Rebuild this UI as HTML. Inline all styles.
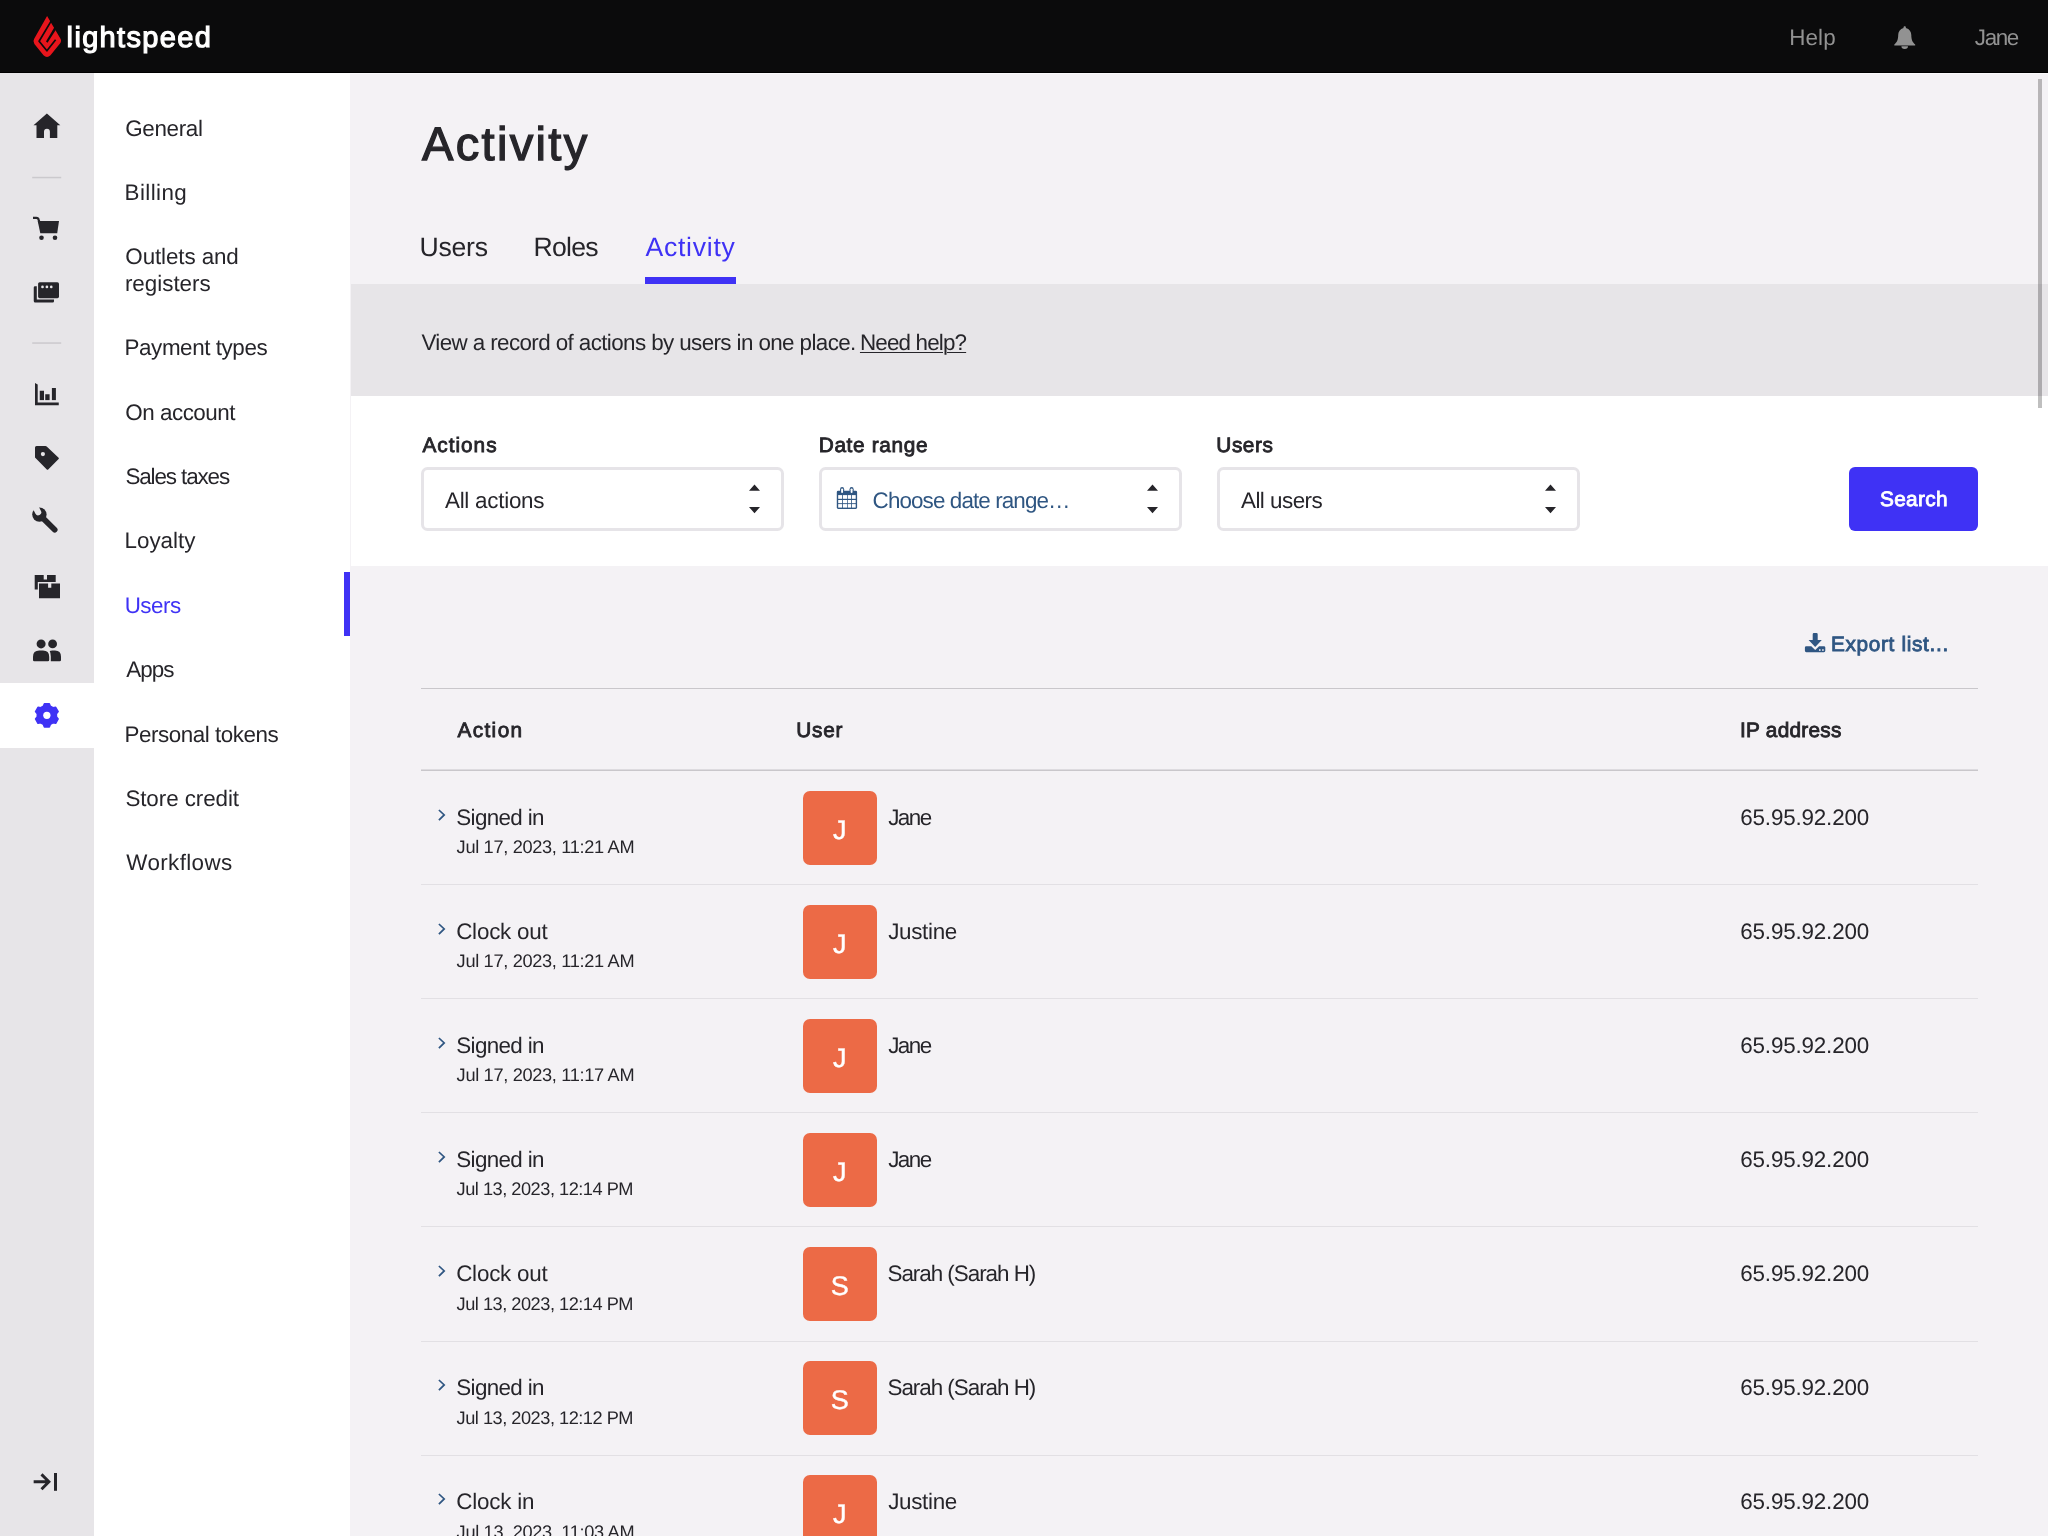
<!DOCTYPE html>
<html lang="en"><head><meta charset="utf-8"><title>Activity</title>
<style>
html,body{margin:0;padding:0}
body{width:2048px;height:1536px;overflow:hidden;position:relative;will-change:transform;text-rendering:geometricPrecision;background:#f4f2f5;font-family:"Liberation Sans",sans-serif;color:#26252a;-webkit-font-smoothing:antialiased}
span,div,a,svg,h1,label,p,b,time{position:absolute;white-space:nowrap;margin:0;padding:0;font-weight:400}
a{color:inherit;text-decoration:none}
.topbar{left:0;top:0;width:2048px;height:72px;background:#0b0b0c;border-bottom:1px solid #000}
.topline{left:0;top:73px;width:2048px;height:1px;background:#fbfafc}
.rail{left:0;top:73px;width:94px;height:1463px;background:#e7e5e8}
.railact{left:0;top:683px;width:94px;height:65px;background:#fff}
.side{left:94px;top:73px;width:256px;height:1463px;background:#fff}
.sideact{left:344px;top:571.5px;width:6px;height:64.5px;background:#3f32f5}
.band{left:351px;top:284px;width:1697px;height:112px;background:#e7e5e8}
.filters{left:351px;top:396px;width:1697px;height:170px;background:#fff}
.sel{box-sizing:border-box;top:466.5px;width:363px;height:64.5px;border:3px solid #e6e4e8;border-radius:6.5px;background:#fff}
.btn{left:1849px;top:466.5px;width:129px;height:64.5px;border-radius:6px;background:#3f32f5}
.av{width:73.5px;height:74px;left:803px;border-radius:7px;background:#ec6a46}
.hl{left:421px;width:1557px}
.tabline{left:645px;top:276.5px;width:90.7px;height:7px;background:#3f32f5}
.scroll{left:2037.6px;top:79px;width:4.4px;height:328.8px;background:rgba(0,0,0,.25)}
</style></head><body>

<div class="topbar"></div><div class="topline"></div><div class="rail"></div><div class="railact"></div><div class="side"></div><div class="sideact"></div>
<div class="band"></div><div class="filters"></div><div class="scroll"></div>
<nav aria-label="Main"><svg style="left:0;top:73px" width="94" height="1463" viewBox="0 73 94 1463"><rect x="32.200" y="176.800" width="29" height="1.500" fill="#cbc9cd"/><rect x="32.200" y="342.300" width="29" height="1.500" fill="#cbc9cd"/><path d="M46.900 113.600 L60.300 125.200 L57.300 125.200 L57.300 138 L49.900 138 L49.900 131.700 A2.950 2.950 0 0 0 44 131.700 L44 138 L36.500 138 L36.500 125.200 L33.500 125.200 Z" fill="#26252a"/><path d="M37.700 221 L59 221 L57.200 233.200 L40.300 233.200 Z" fill="#26252a"/><path d="M33 217.800 L36.300 217.800 Q38.300 217.800 38.700 219.800 L39.500 223" fill="none" stroke="#26252a" stroke-width="2.300"/><circle cx="41.500" cy="237.750" r="2.300" fill="#26252a"/><circle cx="55" cy="237.750" r="2.300" fill="#26252a"/><rect x="38.100" y="282.250" width="20.900" height="15.900" rx="1.600" fill="#26252a"/><circle cx="42.500" cy="286.900" r="1.350" fill="#e7e5e8"/><circle cx="46.900" cy="286.900" r="1.350" fill="#e7e5e8"/><circle cx="51.250" cy="286.900" r="1.350" fill="#e7e5e8"/><path d="M33.750 287.600 Q33.750 286.300 35 286.300 L36.800 286.300 L36.800 299.400 L54 299.400 L54 301.200 Q54 302.500 52.700 302.500 L35.200 302.500 Q33.750 302.500 33.750 301 Z" fill="#26252a"/><path d="M35 383.100 L37.700 384.600 L37.700 402.600 L58.750 402.600 L58.750 405.250 L35 405.250 Z" fill="#26252a"/><rect x="39.750" y="390.750" width="4.250" height="9.350" fill="#26252a"/><rect x="45.250" y="394.250" width="4.350" height="5.850" fill="#26252a"/><rect x="51.900" y="388" width="4" height="12.100" fill="#26252a"/><path d="M36.500 446 L45.500 446 Q46.200 446 46.700 446.500 L58.600 457.700 Q59.300 458.400 58.600 459.100 L48.200 469.400 Q47.500 470.100 46.800 469.400 L35.500 458.100 Q35 457.600 35 456.900 L35 447.500 Q35 446 36.500 446 Z" fill="#26252a"/><circle cx="42.900" cy="454.100" r="2.100" fill="#e7e5e8"/><circle cx="39.400" cy="514.600" r="7.200" fill="#26252a"/><path d="M39.400 514.600 L54.700 529.700" stroke="#26252a" stroke-width="5.700" stroke-linecap="round" fill="none"/><path d="M38.200 512.300 L33.600 503.400" stroke="#e7e5e8" stroke-width="6.200" stroke-linecap="round" fill="none"/><path d="M34.700 574.900 L43.700 574.900 L43.700 579.400 L47 579.400 L47 574.900 L55.700 574.900 L55.700 582.100 L37.800 582.100 L37.800 589.500 L34.700 589.500 Z" fill="#26252a"/><path d="M39 583.400 L48.100 583.400 L48.100 587.700 L51.300 587.700 L51.300 583.400 L60 583.400 L60 598.200 L39 598.200 Z" fill="#26252a"/><circle cx="41.100" cy="643.900" r="4.500" fill="#26252a"/><path d="M33 661.300 L33 656.800 Q33 650.500 39.300 650.500 L43 650.500 Q49.200 650.500 49.200 656.800 L49.200 660 Q49.200 661.300 47.900 661.300 L34.300 661.300 Q33 661.300 33 660 Z" fill="#26252a"/><circle cx="52.600" cy="643.900" r="4.400" fill="#26252a"/><path d="M50.800 661.300 L50.800 656.500 Q50.800 653 49.700 651 Q50.700 650.500 52.200 650.500 L55 650.500 Q61 650.500 61 656.800 L61 660 Q61 661.300 59.700 661.300 Z" fill="#26252a"/><path d="M43.37 706.24 L44.38 703.66 L49.32 703.66 L50.33 706.24 L52.95 707.76 L55.69 707.34 L58.17 711.62 L56.43 713.78 L56.43 716.82 L58.17 718.98 L55.69 723.26 L52.95 722.84 L50.33 724.36 L49.32 726.94 L44.38 726.94 L43.37 724.36 L40.75 722.84 L38.01 723.26 L35.53 718.98 L37.27 716.82 L37.27 713.78 L35.53 711.62 L38.01 707.34 L40.75 707.76 Z" fill="#3f32f5" stroke="#3f32f5" stroke-width="1.500" stroke-linejoin="round"/><circle cx="46.850" cy="715.300" r="3.650" fill="#fff"/><path d="M33.650 1481.800 L48 1481.800 M41.500 1474.400 L48.900 1481.800 L41.500 1489.200" fill="none" stroke="#26252a" stroke-width="2.900"/><rect x="54" y="1473" width="3" height="17.800" fill="#26252a"/></svg></nav>
<header>
<svg style="left:0;top:0" width="100" height="73" viewBox="0 0 100 73"><path d="M47.100 16 L60.200 38.200 Q62 40.800 60 43.400 L50.500 55.200 Q47 58.700 43.500 55.200 L34.400 43.900 Q32.500 41.200 34.200 38.700 Z" fill="#e8151c"/><path d="M51.400 20.600 L39.100 41.200 L46.900 50.800 L55.600 39.700" fill="none" stroke="#0b0b0c" stroke-width="1.700" stroke-linejoin="round"/><path d="M54.400 27.300 L55.900 29.800 L47.500 42.700 L46 41.600 Z" fill="#0b0b0c"/></svg>
<span style="left:66.62px;top:22px;font-size:29px;line-height:32px;letter-spacing:1.328px;color:#fff;-webkit-text-stroke:1.15px #fff;">lightspeed</span>
<a style="left:1789.16px;top:25px;font-size:22.4px;line-height:25px;letter-spacing:0.136px;color:#929292;">Help</a>
<a style="left:1974.85px;top:25px;font-size:22.4px;line-height:25px;letter-spacing:-1.410px;color:#929292;">Jane</a>
<svg style="left:1880px;top:20px" width="50" height="36" viewBox="1880 20 50 36"><path d="M1904.700 26.300 C1905.600 26.300 1906 27 1905.900 27.900 C1909.500 28.800 1911.300 31.800 1911.300 35 C1911.300 40 1912.800 42.600 1915.200 44.400 L1915.200 45.400 L1894.300 45.400 L1894.300 44.400 C1896.700 42.600 1898.200 40 1898.200 35 C1898.200 31.800 1900 28.800 1903.500 27.900 C1903.400 27 1903.800 26.300 1904.700 26.300 Z M1901.400 46.300 L1908 46.300 A3.300 2.700 0 0 1 1901.400 46.300 Z" fill="#929292"/></svg>
</header>
<nav aria-label="Setup">
<a style="left:125.27px;top:116px;font-size:22.4px;line-height:25px;letter-spacing:-0.345px;">General</a>
<a style="left:124.56px;top:180px;font-size:22.4px;line-height:25px;letter-spacing:0.419px;">Billing</a>
<a style="left:125.34px;top:244px;font-size:22.4px;line-height:25px;letter-spacing:-0.106px;">Outlets and</a>
<a style="left:124.91px;top:271px;font-size:22.4px;line-height:25px;letter-spacing:-0.012px;">registers</a>
<a style="left:124.56px;top:335px;font-size:22.4px;line-height:25px;letter-spacing:-0.418px;">Payment types</a>
<a style="left:125.34px;top:400px;font-size:22.4px;line-height:25px;letter-spacing:-0.482px;">On account</a>
<a style="left:125.38px;top:464px;font-size:22.4px;line-height:25px;letter-spacing:-1.097px;">Sales taxes</a>
<a style="left:124.56px;top:528px;font-size:22.4px;line-height:25px;letter-spacing:-0.016px;">Loyalty</a>
<a style="left:124.67px;top:593px;font-size:22.4px;line-height:25px;letter-spacing:-0.489px;color:#3f32f5;">Users</a>
<a style="left:126.36px;top:657px;font-size:22.4px;line-height:25px;letter-spacing:-0.985px;">Apps</a>
<a style="left:124.56px;top:722px;font-size:22.4px;line-height:25px;letter-spacing:-0.463px;">Personal tokens</a>
<a style="left:125.38px;top:786px;font-size:22.4px;line-height:25px;letter-spacing:-0.078px;">Store credit</a>
<a style="left:126.30px;top:850px;font-size:22.4px;line-height:25px;letter-spacing:0.377px;">Workflows</a>
</nav>
<main>
<h1 style="left:422.06px;top:117px;font-size:47px;line-height:53px;letter-spacing:2.319px;-webkit-text-stroke:1.3px #26252a;">Activity</h1>
<a style="left:419.45px;top:232px;font-size:26.6px;line-height:30px;letter-spacing:-0.238px;">Users</a>
<a style="left:533.42px;top:232px;font-size:26.6px;line-height:30px;letter-spacing:-0.716px;">Roles</a>
<a style="left:645.45px;top:232px;font-size:26.6px;line-height:30px;letter-spacing:0.737px;color:#3f32f5;">Activity</a>
<div class="tabline"></div>
<p style="left:421.40px;top:330px;font-size:22.4px;line-height:25px;letter-spacing:-0.601px;">View a record of actions by users in one place.</p>
<a style="left:859.96px;top:330px;font-size:22.4px;line-height:25px;letter-spacing:-0.835px;text-decoration:underline;text-underline-offset:1.500px;text-decoration-thickness:1.300px;">Need help?</a>
<label style="left:422.38px;top:434px;font-size:20.8px;line-height:23px;letter-spacing:0.997px;-webkit-text-stroke:0.85px #26252a;">Actions</label>
<label style="left:818.72px;top:434px;font-size:20.8px;line-height:23px;letter-spacing:0.652px;-webkit-text-stroke:0.85px #26252a;">Date range</label>
<label style="left:1216.32px;top:434px;font-size:20.8px;line-height:23px;letter-spacing:0.547px;-webkit-text-stroke:0.85px #26252a;">Users</label>
<div class="sel" style="left:421px"></div>
<svg style="left:748.7px;top:484px" width="11" height="30" viewBox="0 0 11 30"><path d="M0 6.800 L5.500 .5 L11 6.800 Z M0 23 L11 23 L5.500 29.300 Z" fill="#26252a"/></svg>
<div class="sel" style="left:819px"></div>
<svg style="left:1146.7px;top:484px" width="11" height="30" viewBox="0 0 11 30"><path d="M0 6.800 L5.500 .5 L11 6.800 Z M0 23 L11 23 L5.500 29.300 Z" fill="#26252a"/></svg>
<div class="sel" style="left:1217px"></div>
<svg style="left:1544.7px;top:484px" width="11" height="30" viewBox="0 0 11 30"><path d="M0 6.800 L5.500 .5 L11 6.800 Z M0 23 L11 23 L5.500 29.300 Z" fill="#26252a"/></svg>
<span style="left:444.96px;top:488px;font-size:22.4px;line-height:25px;letter-spacing:-0.249px;">All actions</span>
<svg style="left:830px;top:480px" width="34" height="36" viewBox="830 480 34 36"><rect x="836.800" y="490.700" width="20.300" height="18.300" rx="1.400" fill="#2f5682"/><rect x="838.2" y="495.1" width="3.90" height="3.70" fill="#fff"/><rect x="838.2" y="500.0" width="3.90" height="3.20" fill="#fff"/><rect x="838.2" y="504.1" width="3.90" height="3.50" fill="#fff"/><rect x="842.9" y="495.1" width="4.30" height="3.70" fill="#fff"/><rect x="842.9" y="500.0" width="4.30" height="3.20" fill="#fff"/><rect x="842.9" y="504.1" width="4.30" height="3.50" fill="#fff"/><rect x="847.9" y="495.1" width="3.20" height="3.70" fill="#fff"/><rect x="847.9" y="500.0" width="3.20" height="3.20" fill="#fff"/><rect x="847.9" y="504.1" width="3.20" height="3.50" fill="#fff"/><rect x="851.9" y="495.1" width="3.80" height="3.70" fill="#fff"/><rect x="851.9" y="500.0" width="3.80" height="3.20" fill="#fff"/><rect x="851.9" y="504.1" width="3.80" height="3.50" fill="#fff"/><rect x="840.05" y="487.100" width="4.100" height="6.400" rx="2.050" fill="#2f5682"/><rect x="841.15" y="488.400" width="1.900" height="4.500" rx="0.950" fill="#fff"/><rect x="849.55" y="487.100" width="4.100" height="6.400" rx="2.050" fill="#2f5682"/><rect x="850.65" y="488.400" width="1.900" height="4.500" rx="0.950" fill="#fff"/></svg>
<span style="left:872.61px;top:488px;font-size:22.4px;line-height:25px;letter-spacing:-0.883px;color:#2f5682;">Choose date range…</span>
<span style="left:1240.96px;top:488px;font-size:22.4px;line-height:25px;letter-spacing:-0.505px;">All users</span>
<div class="btn"></div>
<span style="left:1879.98px;top:488px;font-size:20.8px;line-height:23px;letter-spacing:0.358px;color:#fff;-webkit-text-stroke:0.85px #fff;">Search</span>
<svg style="left:1800px;top:628px" width="30" height="30" viewBox="1800 628 30 30"><path d="M1812.700 634.300 Q1812.700 633.100 1813.900 633.100 L1816.500 633.100 Q1817.700 633.100 1817.700 634.300 L1817.700 640.100 L1821.800 640.100 L1815.200 647.100 L1808.600 640.100 L1812.700 640.100 Z" fill="#2f5682"/><path d="M1806.300 646.200 L1811.300 646.200 L1815.200 649.900 L1819.100 646.200 L1823.900 646.200 Q1825.300 646.200 1825.300 647.600 L1825.300 650.800 Q1825.300 652.200 1823.900 652.200 L1806.300 652.200 Q1804.900 652.200 1804.900 650.800 L1804.900 647.600 Q1804.900 646.200 1806.300 646.200 Z" fill="#2f5682"/><rect x="1819" y="649.300" width="1.600" height="1.500" fill="#f4f2f5"/><rect x="1822.100" y="649.300" width="1.600" height="1.500" fill="#f4f2f5"/></svg>
<a style="left:1830.97px;top:633px;font-size:20.8px;line-height:23px;letter-spacing:0.662px;color:#2f5682;-webkit-text-stroke:0.85px #2f5682;">Export list...</a>
<div class="hl" style="top:688px;height:1px;background:#c9c7cb"></div>
<div class="hl" style="top:769px;height:1px;background:#dddbdf"></div><div class="hl" style="top:770px;height:1px;background:#c9c7cb"></div>
<b style="left:457.38px;top:719px;font-size:20.8px;line-height:23px;letter-spacing:1.396px;-webkit-text-stroke:0.85px #26252a;">Action</b>
<b style="left:796.32px;top:719px;font-size:20.8px;line-height:23px;letter-spacing:0.728px;-webkit-text-stroke:0.85px #26252a;">User</b>
<b style="left:1740.01px;top:719px;font-size:20.8px;line-height:23px;letter-spacing:0.252px;-webkit-text-stroke:0.85px #26252a;">IP address</b>
<article>
<svg style="left:436px;top:807.00px" width="12" height="16" viewBox="436 807 12 16"><path d="M438.900 810 L444.200 814.950 L438.900 820.100" fill="none" stroke="#2f5682" stroke-width="1.700"/></svg>
<span style="left:456.28px;top:805px;font-size:22.4px;line-height:25px;letter-spacing:-0.642px;">Signed in</span>
<time style="left:456.62px;top:837px;font-size:18.2px;line-height:20px;letter-spacing:-0.322px;">Jul 17, 2023, 11:21 AM</time>
<div class="av" style="top:790.90px"></div>
<span style="left:803.00px;top:815px;font-size:27px;line-height:30px;color:#fff;width:73.500px;text-align:center;-webkit-text-stroke:0.400px #fff;">J</span>
<span style="left:888.15px;top:805px;font-size:22.4px;line-height:25px;letter-spacing:-1.476px;">Jane</span>
<span style="left:1740.26px;top:805px;font-size:22.4px;line-height:25px;letter-spacing:-0.162px;">65.95.92.200</span>
<div class="hl" style="top:884px;height:1px;background:#e2e0e4"></div>
</article>
<article>
<svg style="left:436px;top:921.08px" width="12" height="16" viewBox="436 807 12 16"><path d="M438.900 810 L444.200 814.950 L438.900 820.100" fill="none" stroke="#2f5682" stroke-width="1.700"/></svg>
<span style="left:456.16px;top:919px;font-size:22.4px;line-height:25px;letter-spacing:-0.209px;">Clock out</span>
<time style="left:456.62px;top:951px;font-size:18.2px;line-height:20px;letter-spacing:-0.322px;">Jul 17, 2023, 11:21 AM</time>
<div class="av" style="top:904.98px"></div>
<span style="left:803.00px;top:929px;font-size:27px;line-height:30px;color:#fff;width:73.500px;text-align:center;-webkit-text-stroke:0.400px #fff;">J</span>
<span style="left:888.15px;top:919px;font-size:22.4px;line-height:25px;letter-spacing:-0.305px;">Justine</span>
<span style="left:1740.26px;top:919px;font-size:22.4px;line-height:25px;letter-spacing:-0.162px;">65.95.92.200</span>
<div class="hl" style="top:998px;height:1px;background:#e2e0e4"></div>
</article>
<article>
<svg style="left:436px;top:1035.16px" width="12" height="16" viewBox="436 807 12 16"><path d="M438.900 810 L444.200 814.950 L438.900 820.100" fill="none" stroke="#2f5682" stroke-width="1.700"/></svg>
<span style="left:456.28px;top:1033px;font-size:22.4px;line-height:25px;letter-spacing:-0.642px;">Signed in</span>
<time style="left:456.62px;top:1065px;font-size:18.2px;line-height:20px;letter-spacing:-0.322px;">Jul 17, 2023, 11:17 AM</time>
<div class="av" style="top:1019.06px"></div>
<span style="left:803.00px;top:1043px;font-size:27px;line-height:30px;color:#fff;width:73.500px;text-align:center;-webkit-text-stroke:0.400px #fff;">J</span>
<span style="left:888.15px;top:1033px;font-size:22.4px;line-height:25px;letter-spacing:-1.476px;">Jane</span>
<span style="left:1740.26px;top:1033px;font-size:22.4px;line-height:25px;letter-spacing:-0.162px;">65.95.92.200</span>
<div class="hl" style="top:1112px;height:1px;background:#e2e0e4"></div>
</article>
<article>
<svg style="left:436px;top:1149.24px" width="12" height="16" viewBox="436 807 12 16"><path d="M438.900 810 L444.200 814.950 L438.900 820.100" fill="none" stroke="#2f5682" stroke-width="1.700"/></svg>
<span style="left:456.28px;top:1147px;font-size:22.4px;line-height:25px;letter-spacing:-0.642px;">Signed in</span>
<time style="left:456.62px;top:1179px;font-size:18.2px;line-height:20px;letter-spacing:-0.486px;">Jul 13, 2023, 12:14 PM</time>
<div class="av" style="top:1133.14px"></div>
<span style="left:803.00px;top:1157px;font-size:27px;line-height:30px;color:#fff;width:73.500px;text-align:center;-webkit-text-stroke:0.400px #fff;">J</span>
<span style="left:888.15px;top:1147px;font-size:22.4px;line-height:25px;letter-spacing:-1.476px;">Jane</span>
<span style="left:1740.26px;top:1147px;font-size:22.4px;line-height:25px;letter-spacing:-0.162px;">65.95.92.200</span>
<div class="hl" style="top:1226px;height:1px;background:#e2e0e4"></div>
</article>
<article>
<svg style="left:436px;top:1263.32px" width="12" height="16" viewBox="436 807 12 16"><path d="M438.900 810 L444.200 814.950 L438.900 820.100" fill="none" stroke="#2f5682" stroke-width="1.700"/></svg>
<span style="left:456.16px;top:1261px;font-size:22.4px;line-height:25px;letter-spacing:-0.209px;">Clock out</span>
<time style="left:456.62px;top:1294px;font-size:18.2px;line-height:20px;letter-spacing:-0.486px;">Jul 13, 2023, 12:14 PM</time>
<div class="av" style="top:1247.22px"></div>
<span style="left:803.00px;top:1271px;font-size:27px;line-height:30px;color:#fff;width:73.500px;text-align:center;-webkit-text-stroke:0.400px #fff;">S</span>
<span style="left:887.48px;top:1261px;font-size:22.4px;line-height:25px;letter-spacing:-1.014px;">Sarah (Sarah H)</span>
<span style="left:1740.26px;top:1261px;font-size:22.4px;line-height:25px;letter-spacing:-0.162px;">65.95.92.200</span>
<div class="hl" style="top:1341px;height:1px;background:#e2e0e4"></div>
</article>
<article>
<svg style="left:436px;top:1377.40px" width="12" height="16" viewBox="436 807 12 16"><path d="M438.900 810 L444.200 814.950 L438.900 820.100" fill="none" stroke="#2f5682" stroke-width="1.700"/></svg>
<span style="left:456.28px;top:1375px;font-size:22.4px;line-height:25px;letter-spacing:-0.642px;">Signed in</span>
<time style="left:456.62px;top:1408px;font-size:18.2px;line-height:20px;letter-spacing:-0.486px;">Jul 13, 2023, 12:12 PM</time>
<div class="av" style="top:1361.30px"></div>
<span style="left:803.00px;top:1385px;font-size:27px;line-height:30px;color:#fff;width:73.500px;text-align:center;-webkit-text-stroke:0.400px #fff;">S</span>
<span style="left:887.48px;top:1375px;font-size:22.4px;line-height:25px;letter-spacing:-1.014px;">Sarah (Sarah H)</span>
<span style="left:1740.26px;top:1375px;font-size:22.4px;line-height:25px;letter-spacing:-0.162px;">65.95.92.200</span>
<div class="hl" style="top:1455px;height:1px;background:#e2e0e4"></div>
</article>
<article>
<svg style="left:436px;top:1491.48px" width="12" height="16" viewBox="436 807 12 16"><path d="M438.900 810 L444.200 814.950 L438.900 820.100" fill="none" stroke="#2f5682" stroke-width="1.700"/></svg>
<span style="left:456.16px;top:1489px;font-size:22.4px;line-height:25px;letter-spacing:-0.183px;">Clock in</span>
<time style="left:456.62px;top:1522px;font-size:18.2px;line-height:20px;letter-spacing:-0.322px;">Jul 13, 2023, 11:03 AM</time>
<div class="av" style="top:1475.38px"></div>
<span style="left:803.00px;top:1499px;font-size:27px;line-height:30px;color:#fff;width:73.500px;text-align:center;-webkit-text-stroke:0.400px #fff;">J</span>
<span style="left:888.15px;top:1489px;font-size:22.4px;line-height:25px;letter-spacing:-0.305px;">Justine</span>
<span style="left:1740.26px;top:1489px;font-size:22.4px;line-height:25px;letter-spacing:-0.162px;">65.95.92.200</span>
</article>
</main>
</body></html>
